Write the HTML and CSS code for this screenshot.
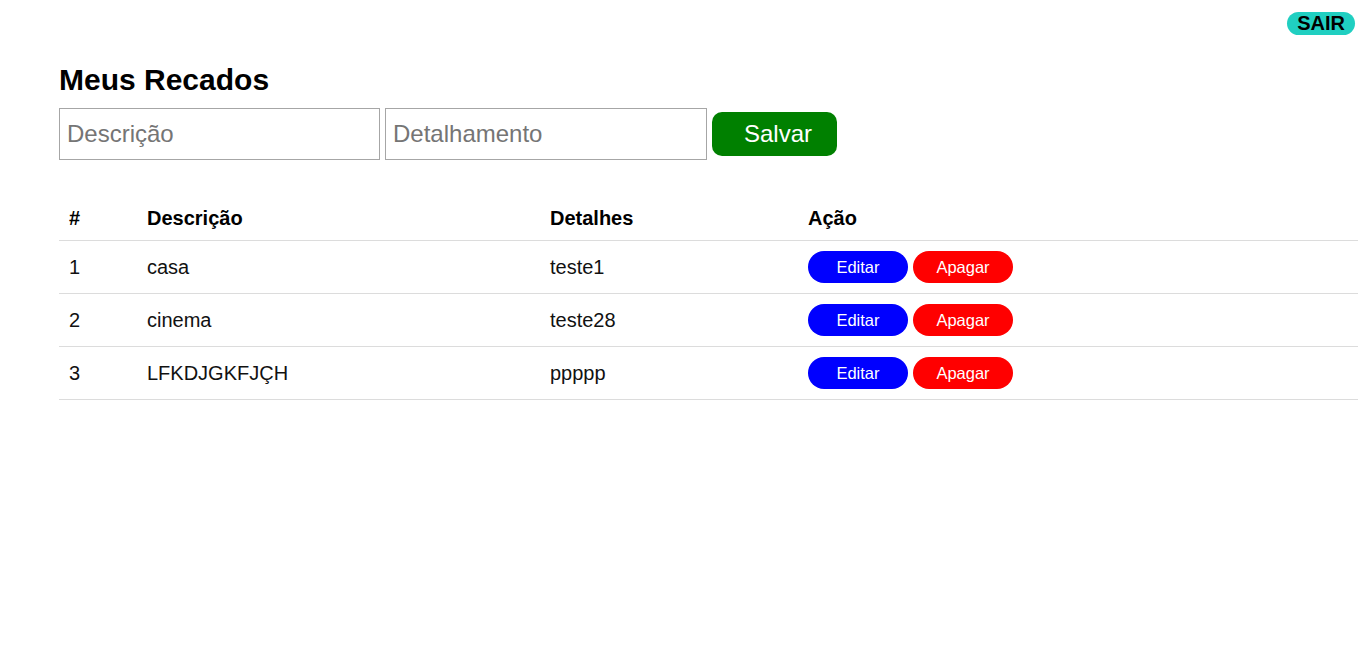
FILE: index.html
```html
<!DOCTYPE html>
<html lang="pt-BR">
<head>
<meta charset="utf-8">
<title>Meus Recados</title>
<link rel="stylesheet" href="styles.css">
</head>
<body>
<header class="topbar">
  <button class="btn-sair">SAIR</button>
</header>
<main class="content">
  <h1 class="title">Meus Recados</h1>
  <form class="form-row">
    <input class="field" type="text" placeholder="Descrição">
    <input class="field field-wide" type="text" placeholder="Detalhamento">
    <button type="button" class="btn-salvar">Salvar</button>
  </form>
  <table class="recados">
    <thead>
      <tr>
        <th class="col-id">#</th>
        <th class="col-desc">Descrição</th>
        <th class="col-det">Detalhes</th>
        <th>Ação</th>
      </tr>
    </thead>
    <tbody>
      <tr>
        <td>1</td><td>casa</td><td>teste1</td>
        <td><div class="actions"><button class="btn-pill btn-edit">Editar</button><button class="btn-pill btn-del">Apagar</button></div></td>
      </tr>
      <tr>
        <td>2</td><td>cinema</td><td>teste28</td>
        <td><div class="actions"><button class="btn-pill btn-edit">Editar</button><button class="btn-pill btn-del">Apagar</button></div></td>
      </tr>
      <tr>
        <td>3</td><td>LFKDJGKFJÇH</td><td>ppppp</td>
        <td><div class="actions"><button class="btn-pill btn-edit">Editar</button><button class="btn-pill btn-del">Apagar</button></div></td>
      </tr>
    </tbody>
  </table>
</main>
</body>
</html>
```
FILE: styles.css
```css
* { box-sizing: border-box; }
html, body { margin: 0; padding: 0; background: #fff; }
body {
  font-family: "Liberation Sans", Arial, sans-serif;
  color: #000;
}
.topbar {
  display: flex;
  justify-content: flex-end;
  padding: 12px 3px 0 0;
  height: 35px;
}
.btn-sair {
  font-family: inherit;
  font-size: 20px;
  font-weight: bold;
  line-height: 23px;
  height: 23px;
  padding: 0 10px;
  border: none;
  border-radius: 12px;
  background: #20cfc1;
  color: #000;
}
.content {
  padding-left: 59px;
}
.title {
  margin: 27px 0 0;
  font-size: 30px;
  font-weight: bold;
  line-height: 35px;
  height: 46px;
}
.form-row {
  display: flex;
  align-items: center;
  gap: 5px;
  margin: 0;
}
.field {
  width: 321px;
  height: 52px;
  padding: 0 7px;
  border: 1px solid #a6a6a6;
  font-family: inherit;
  font-size: 24px;
  color: #000;
  outline: none;
}
.field-wide { width: 322px; }
.field::placeholder { color: #757575; }
.btn-salvar {
  width: 125px;
  height: 44px;
  padding: 0 0 0 7px;
  border: none;
  border-radius: 10px;
  background: #008000;
  color: #fff;
  font-family: inherit;
  font-size: 24px;
}
.recados {
  margin-top: 37px;
  width: 100%;
  border-collapse: collapse;
  font-size: 20px;
}
.recados th, .recados td {
  text-align: left;
  padding: 10px;
  border-bottom: 1px solid #dcdcdc;
  line-height: 23px;
}
.recados td { color: #111; }
.col-id { width: 78px; }
.col-desc { width: 403px; }
.col-det { width: 258px; }
.actions {
  display: flex;
  gap: 5px;
}
.btn-pill {
  width: 100px;
  height: 32px;
  border: none;
  border-radius: 16px;
  color: #fff;
  font-family: inherit;
  font-size: 16.5px;
  padding: 0;
}
.btn-edit { background: #0000ff; }
.btn-del { background: #ff0000; }
```
